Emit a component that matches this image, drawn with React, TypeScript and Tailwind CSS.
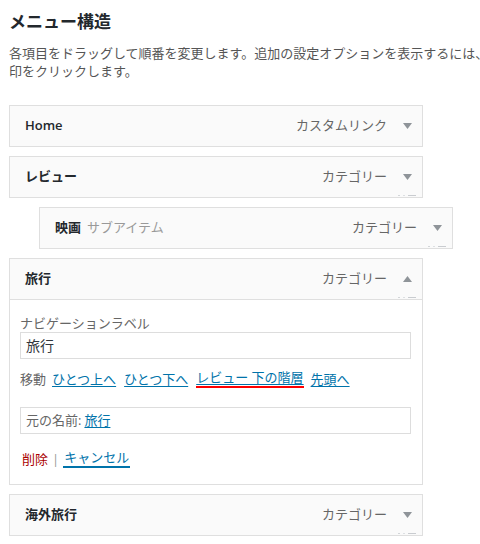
import React from "react";

type Item = {
  title: string;
  type: string;
  sub?: boolean;
};

const FONT = {
  fontFamily: '"Open Sans", "Noto Sans CJK JP", sans-serif',
};

function Arrow({ up }: { up?: boolean }) {
  return (
    <span className="flex h-[20px] w-[20px] items-center justify-center">
      <svg width="9" height="6" viewBox="0 0 9 6">
        {up ? (
          <path d="M0 6 L4.5 0 L9 6 Z" fill="#8f9499" />
        ) : (
          <path d="M0 0 L9 0 L4.5 6 Z" fill="#8f9499" />
        )}
      </svg>
    </span>
  );
}

function Ticks() {
  // 下にはみ出した文字の切れ端
  return (
    <span className="absolute bottom-[1px] right-[6px] flex items-end gap-[3px]">
      <span className="h-[1px] w-[2px] bg-[#d3d6d9]" />
      <span className="h-[1px] w-[2px] bg-[#dde0e3]" />
      <span className="h-[1px] w-[8px] bg-[#c9ccd0]" />
    </span>
  );
}

function ItemBar({ item, open, ticks = true }: { item: Item; open?: boolean; ticks?: boolean }) {
  return (
    <div className="relative flex h-[40px] items-center justify-between bg-[#fafafa] pl-[15px] pr-[5px]">
      <div className="flex items-center gap-[6px] text-[13px]">
        <span className="font-semibold text-[#23282d]">{item.title}</span>
        {item.sub && <span className="text-[#999]">サブアイテム</span>}
      </div>
      <div className="flex items-center gap-[10px] text-[13px] text-[#666]">
        <span>{item.type}</span>
        <Arrow up={open} />
      </div>
      {ticks && <Ticks />}
    </div>
  );
}

export default function App() {
  return (
    <div className="w-[480px] h-[544px] overflow-hidden bg-white" style={FONT}>
      <div className="pl-[9px] pt-[10px]">
        <h3 className="text-[17px] font-bold leading-[24px] text-[#23282d]">
          メニュー構造
        </h3>
        <p className="mt-[10px] whitespace-nowrap text-[13px] leading-[18px] text-[#555]">
          各項目をドラッグして順番を変更します。追加の設定オプションを表示するには、項目の右にある矢
          <br />
          印をクリックします。
        </p>

        <div className="mt-[25px] flex flex-col gap-[9px]">
          <div className="w-[414px] border border-[#dfdfdf]">
            <ItemBar item={{ title: "Home", type: "カスタムリンク" }} ticks={false} />
          </div>
          <div className="w-[414px] border border-[#dfdfdf]">
            <ItemBar item={{ title: "レビュー", type: "カテゴリー" }} />
          </div>
          <div className="ml-[30px] w-[414px] border border-[#dfdfdf]">
            <ItemBar item={{ title: "映画", type: "カテゴリー", sub: true }} />
          </div>

          <div className="w-[414px] border border-[#dfdfdf]">
            <div className="border-b border-[#dfdfdf]">
              <ItemBar item={{ title: "旅行", type: "カテゴリー" }} open />
            </div>
            <div className="bg-white px-[10px] pb-[16px] pt-[14px] text-[13px]">
              <div className="leading-[18px] text-[#666]">ナビゲーションラベル</div>
              <div className="flex h-[27px] w-[391px] items-center border border-[#ddd] px-[5px] text-[14px] text-[#32373c]">
                旅行
              </div>

              <div className="mt-[10px] flex items-center leading-[18px]">
                <span className="text-[#666]">移動</span>
                <a className="ml-[6px] text-[#0073aa] underline underline-offset-2">ひとつ上へ</a>
                <a className="ml-[8px] text-[#0073aa] underline underline-offset-2">ひとつ下へ</a>
                <span className="ml-[8px] inline-block border-b-2 border-[#ff0000] leading-[17px]">
                  <a className="text-[#0073aa] underline underline-offset-2">レビュー 下の階層</a>
                </span>
                <a className="ml-[7px] text-[#0073aa] underline underline-offset-2">先頭へ</a>
              </div>

              <div className="mt-[19px] flex h-[27px] w-[391px] items-center border border-[#ddd] px-[5px] text-[13px]">
                <span className="text-[#666]">元の名前:</span>
                <a className="ml-[3px] text-[#0073aa] underline underline-offset-2">旅行</a>
              </div>

              <div className="mt-[15px] flex items-center leading-[18px]">
                <span className="ml-[2px] text-[#a00]">削除</span>
                <span className="mx-[4px] text-[#999]">|</span>
                <span className="inline-block border-b-2 border-[#0073aa] px-[1px] leading-[17px] text-[#0073aa]">
                  キャンセル
                </span>
              </div>
            </div>
          </div>

          <div className="w-[414px] border border-[#dfdfdf]">
            <ItemBar item={{ title: "海外旅行", type: "カテゴリー" }} />
          </div>
        </div>
      </div>
    </div>
  );
}
